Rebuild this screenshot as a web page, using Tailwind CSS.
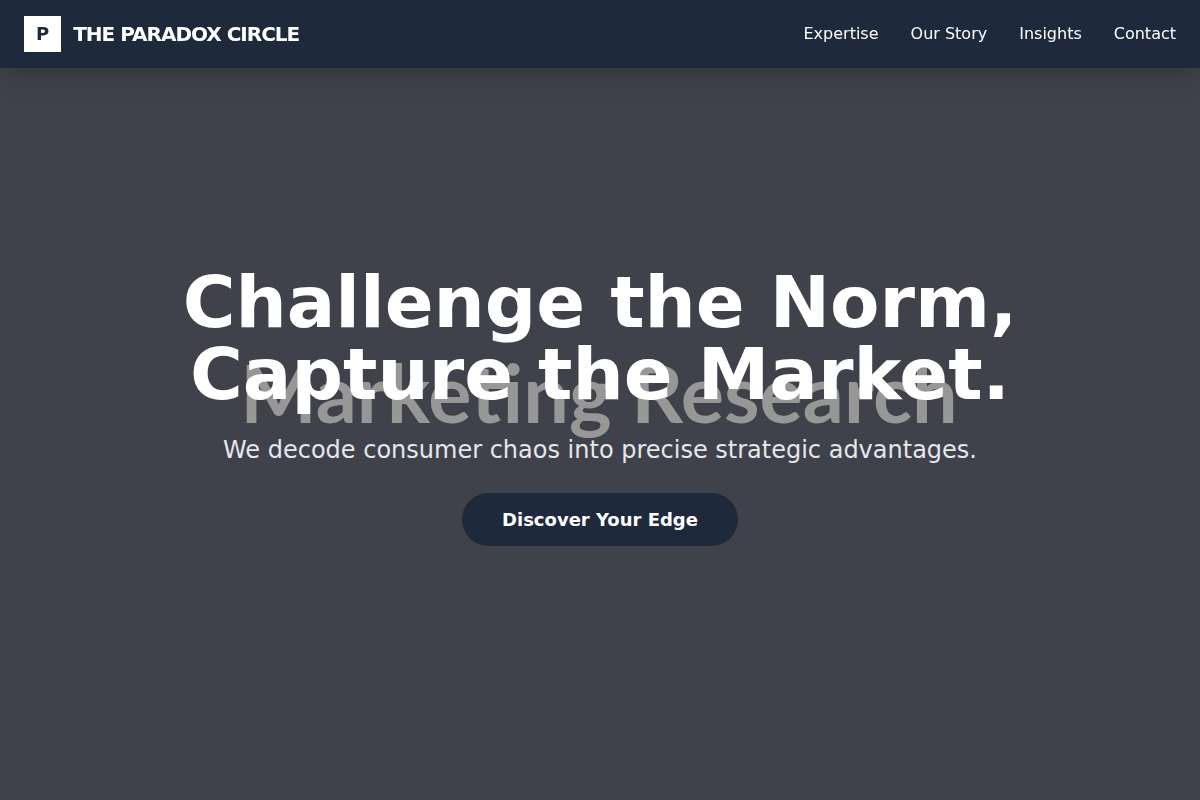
<!DOCTYPE html>
<html lang="en">
<head>
    <meta charset="UTF-8">
    <meta name="viewport" content="width=device-width, initial-scale=1.0">
    <title>The Paradox Circle</title>
    <script src="https://cdn.jsdelivr.net/npm/@tailwindcss/browser@4"></script>
</head>
<body class="font-['DejaVu_Sans',sans-serif] bg-[#3f424a] text-white">

    <!-- Header -->
    <header class="fixed top-0 inset-x-0 z-20 bg-[#1e293b] shadow-xl px-6 py-4 flex items-center justify-between">
        <a href="#home" class="flex items-center gap-3">
            <span class="bg-white text-[#1e293b] text-lg font-bold px-3 py-1">P</span>
            <span class="text-xl font-bold tracking-tighter">THE PARADOX CIRCLE</span>
        </a>
        <nav class="flex gap-8">
            <a href="#expertise" class="hover:text-gray-300">Expertise</a>
            <a href="#story" class="hover:text-gray-300">Our Story</a>
            <a href="#insights" class="hover:text-gray-300">Insights</a>
            <a href="#contact" class="hover:text-gray-300">Contact</a>
        </nav>
    </header>

    <!-- Hero -->
    <section id="home" class="relative min-h-screen flex items-center justify-center overflow-hidden">
        <div class="absolute inset-0 pb-[18px] pr-[2px] flex items-center justify-center font-['Lato',sans-serif] font-bold text-[81px] leading-none text-[#979797] whitespace-nowrap" aria-hidden="true">Marketing Research</div>
        <div class="relative max-w-4xl text-center">
            <h1 class="text-7xl leading-none font-bold mb-6">Challenge the Norm, Capture the Market.</h1>
            <p class="text-2xl text-gray-200 mb-10">We decode consumer chaos into precise strategic advantages.</p>
            <a href="#expertise" class="bg-[#1e293b] text-lg font-bold px-10 py-4 rounded-full hover:bg-slate-700">Discover Your Edge</a>
        </div>
    </section>

</body>
</html>
